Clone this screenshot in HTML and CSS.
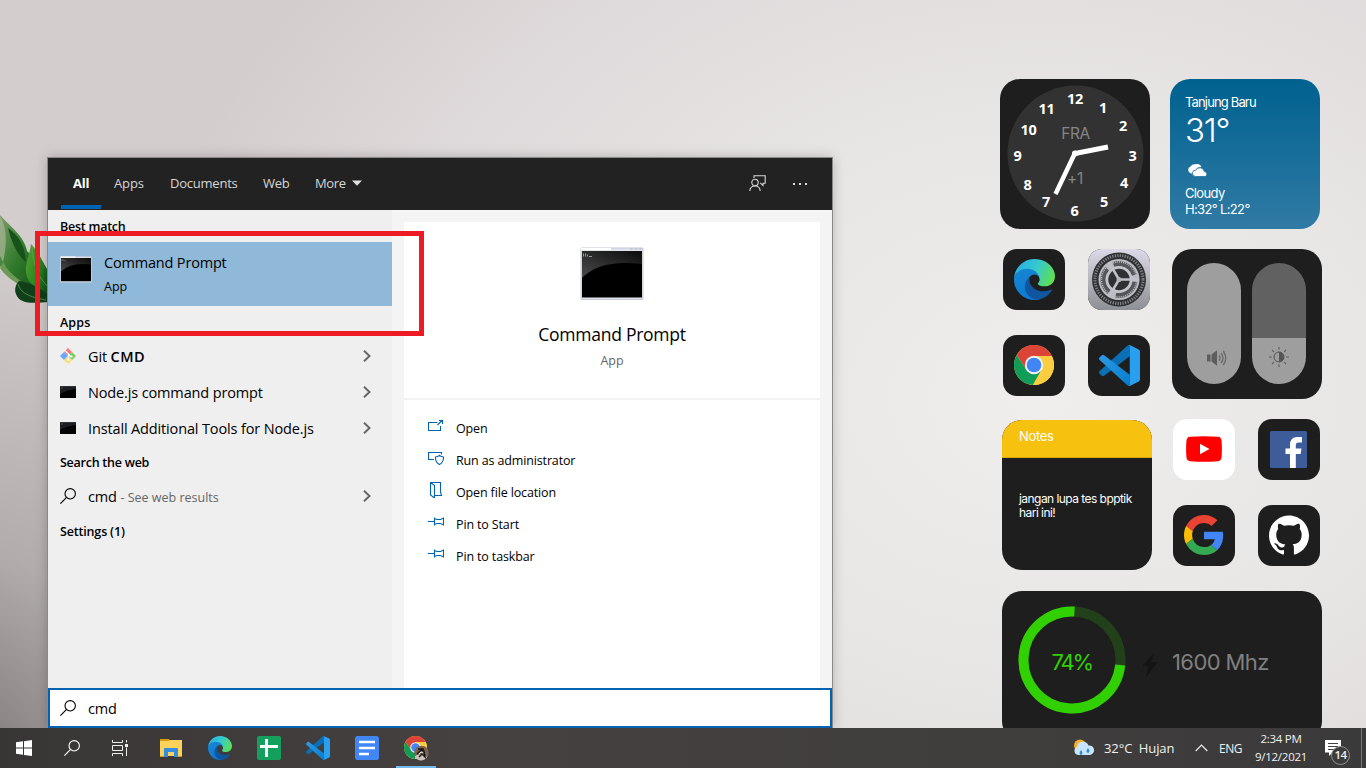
FILE: index.html
```html
<!DOCTYPE html>
<html lang="en">
<head>
<meta charset="utf-8">
<title>Desktop</title>
<link rel="stylesheet" href="styles.css">
</head>
<body>
<svg class="defs" width="0" height="0" aria-hidden="true">
  <defs>
    <linearGradient id="edgeTop" x1="0" y1="0.3" x2="1" y2="0.6"><stop offset="0" stop-color="#2ab0e4"/><stop offset=".5" stop-color="#35c8cf"/><stop offset="1" stop-color="#5fe04f"/></linearGradient>
    <linearGradient id="edgeLeft" x1="0" y1="0" x2=".4" y2="1"><stop offset="0" stop-color="#1887d0"/><stop offset="1" stop-color="#0b7bd6"/></linearGradient>
    <linearGradient id="silver" x1="0" y1="0" x2="0" y2="1"><stop offset="0" stop-color="#dcd9e8"/><stop offset="1" stop-color="#8d9094"/></linearGradient>
    <linearGradient id="leafA" x1="0" y1="0" x2="1" y2="1"><stop offset="0" stop-color="#7d9b68"/><stop offset=".45" stop-color="#2f7a2b"/><stop offset="1" stop-color="#123f17"/></linearGradient>
    <linearGradient id="leafB" x1="0" y1="0" x2="1" y2=".6"><stop offset="0" stop-color="#57a135"/><stop offset=".6" stop-color="#298a20"/><stop offset="1" stop-color="#14571a"/></linearGradient>
    <linearGradient id="sheen" x1="0" y1="1" x2="1" y2="0"><stop offset="0" stop-color="#4a4a4a"/><stop offset="1" stop-color="#0c0c0c"/></linearGradient>
    <linearGradient id="codeFront" x1="0" y1="0" x2="1" y2="1"><stop offset="0" stop-color="#2c9be6"/><stop offset="1" stop-color="#087dcc"/></linearGradient>
  </defs>
  <symbol id="edge" viewBox="0 0 256 256">
    <path fill="#0f55a0" d="M231.1 190.5c-3.4 1.8-6.9 3.4-10.5 4.7-11.5 4.3-23.6 6.5-35.9 6.5-47.3 0-88.5-32.5-88.5-74.3 0-11.4 6.4-21.9 16.4-27.3-42.8 1.8-53.8 46.4-53.8 72.5 0 74 68.1 81.4 82.8 81.4 7.9 0 19.8-2.3 27-4.6l1.3-.4c27.6-9.5 51-28.1 66.6-52.8 1.2-1.9.6-4.3-1.2-5.5-1.3-.8-2.9-.9-4.2-.2z"/>
    <path fill="url(#edgeLeft)" d="M105.7 241.4c-8.9-5.5-16.6-12.8-22.7-21.3-26.3-36-18.4-86.5 17.6-112.8 3.8-2.7 7.7-5.2 11.9-7.2 3.1-1.5 8.4-4.1 15.5-4 10.1.1 19.6 4.9 25.7 13 4 5.4 6.3 11.9 6.4 18.7 0-.2 24.5-79.6-80-79.6-43.9 0-80 41.7-80 78.2-.2 19.3 4 38.5 12.1 56 27.6 58.8 94.8 87.6 156.4 67.1-21.1 6.6-44.1 3.7-62.9-8.1z"/>
    <path fill="url(#edgeTop)" d="M152.3 148.9c-.8 1-3.3 2.5-3.3 5.7 0 2.6 1.7 5.1 4.7 7.2 14.4 10 41.5 8.7 41.6 8.7 10.7 0 21.1-2.9 30.3-8.3 18.8-11 30.4-31.1 30.4-52.9.3-22.4-8-37.3-11.3-43.9C223.5 23.9 177.7 0 128 0 58 0 1 56.2 0 126.2c.5-36.5 36.8-66 80-66 3.5 0 23.5.3 42 10.1 16.3 8.6 24.9 18.9 30.8 29.2 6.2 10.7 7.3 24.1 7.3 29.5s-2.7 13.3-7.8 19.9z"/>
  </symbol>
  <symbol id="chrome" viewBox="0 0 40 40">
    <circle cx="20" cy="20" r="20" fill="#fdcd40"/>
    <path fill="#db4437" d="M20 11H37.9A20 20 0 0 0 2.7 10L12.2 24.5Z"/>
    <path fill="#109d58" d="M2.7 10A20 20 0 0 0 19 40L27.8 24.5 12.2 24.5Z"/>
    <path fill="#fdcd40" d="M20 11H37.9A20 20 0 0 1 19 40L27.8 24.5Z"/>
    <circle cx="20" cy="20" r="9.2" fill="#f3f3f3"/>
    <circle cx="20" cy="20" r="7.3" fill="#4285f4"/>
  </symbol>
  <symbol id="code" viewBox="0 0 24 24">
    <path fill="#0a6fb4" d="M16.6.4 18 1v5.6L3 18q-.7.5-1.3 0L.4 16.8q-.8-.8 0-1.6Z"/>
    <path fill="url(#codeFront)" d="M.4 8.8q-.8-.8 0-1.6L1.7 6q.6-.5 1.3 0L18 17.4V23l-1.4.6Z"/>
    <path fill="#29a0ef" d="M16.5.5q.8-.8 1.8-.3l4.9 2.4q.8.4.8 1.4v16q0 1-.8 1.4l-4.9 2.4q-1 .5-1.8-.3 1.5.6 1.5-1V1.5q0-1.6-1.5-1Z"/>
  </symbol>
  <symbol id="search" viewBox="0 0 16 16">
    <circle cx="10.2" cy="5.8" r="5.2" fill="none" stroke="currentColor" stroke-width="1.1"/>
    <path d="M6.3 9.7.4 15.6" stroke="currentColor" stroke-width="1.2"/>
  </symbol>
  <symbol id="chev" viewBox="0 0 8 12"><path d="M1 .7 6.500 6 1 11.300" fill="none" stroke="#646464" stroke-width="1.900"/></symbol>
  <symbol id="pin" viewBox="0 0 16 16"><path d="M0 7.500h6M6.500 3.500v8M6.500 4.500l2.500 1h3.500l3-1.500v7l-3-1.500H9l-2.500 1" fill="none" stroke="#0063b1" stroke-width="1.1"/></symbol>
  <symbol id="miniterm" viewBox="0 0 16 12"><path d="M0 0h16v12H0z" fill="#030303"/><path d="M0 0h16v3Q6 4 0 8Z" fill="#1b1d20"/><path d="M1 2h2" stroke="#777" stroke-width=".6"/><path d="M0 .2h16" stroke="#6d7177" stroke-width=".4"/></symbol>
  <symbol id="term" viewBox="0 0 64 54">
    <path d="M1 1h62v51.500H1z" fill="#dfe3eb" stroke="#c5c9d3"/>
    <path d="M1 1h30v2H1z" fill="#fff"/><path d="M50 2h3m1.500 0h3m1.500 0h3" stroke="#b6bac4"/>
    <path d="M2 4h60v46.500H2z" fill="#000"/>
    <path d="M2 4h60v13Q20 12 2 31Z" fill="url(#sheen)"/>
    <path d="M3.500 6.500v3m2-3v3m2-2v2m1.500 0h3" stroke="#b0b0b0" stroke-width=".8"/>
  </symbol>
</svg>

<main class="desktop">
  <svg class="plant" width="60" height="110" viewBox="0 0 60 110">
    <path fill="url(#leafA)" d="M0 9C9 20 24 29 27 45c8 8 16 15 22 27v20C35 86 22 78 12 73 6 69 3 63 0 60Z"/>
    <path fill="#a9b596" d="M0 10c7 10 7 30 3 46L0 50Z" opacity=".7"/>
    <path fill="#17521b" d="M8 22c12 8 17 20 18 34-8-6-14-18-18-34Z"/>
    <path fill="#6c9955" d="M3 56C10 70 25 78 39 86 26 84 8 74 0 62Z"/>
    <path fill="url(#leafB)" d="M31 38c8 8 13 21 18 28v22C35 82 25 76 26 62c1-10 4-15 5-24Z"/>
    <path fill="#10401a" d="M19 75c10 1 21 7 30 14v7c-15 1-29 3-33-8-2-5 0-10 3-13Z"/>
    <path d="M18 78c2 8 10 13 28 16M32 40c1 18 5 30 17 42" fill="none" stroke="#6fa052" stroke-width=".7"/>
  </svg>

  <section class="widget clock">
    <svg width="150" height="150" viewBox="0 0 150 150">
      <circle cx="75.500" cy="74.500" r="68" fill="#323232"/>
      <g class="dim"><text x="75.500" y="60" text-anchor="middle">FRA</text><text x="75" y="105" text-anchor="middle">+1</text></g>
      <g class="hours" text-anchor="middle">
        <text x="75" y="24.500">12</text><text x="103" y="33.500">1</text><text x="123" y="52">2</text><text x="132.500" y="81.500">3</text><text x="124" y="108.500">4</text><text x="104" y="127.500">5</text><text x="74.500" y="136.500">6</text><text x="46" y="127.500">7</text><text x="27.500" y="111">8</text><text x="17.500" y="81.500">9</text><text x="28.500" y="55.500">10</text><text x="46.500" y="34.500">11</text>
      </g>
      <path d="M75 74.500 108 68" stroke="#fff" stroke-width="5"/><path d="M75 74 55.500 115" stroke="#fff" stroke-width="4.500"/><circle cx="75" cy="74.500" r="3" fill="#fff"/>
    </svg>
  </section>

  <section class="widget weather">
    <div class="place">Tanjung Baru</div><div class="temp">31°</div>
    <svg class="cloud" width="22" height="14" viewBox="0 0 22 14"><path fill="#fff" d="M4 10.500a3.700 3.700 0 0 1-.5-7A5 5 0 0 1 8 1.300 5 5 0 0 1 14.500 4Q10 4 8.500 7.300 6 8 5.500 10.500Z"/><path fill="#fff" stroke="#1b6f9f" stroke-width=".8" d="M8.500 13.500a3.200 3.200 0 0 1 .3-6.400 4.600 4.600 0 0 1 8.500 1.400 2.600 2.600 0 0 1 1 5Z"/></svg>
    <div>Cloudy</div><div>H:32° L:22°</div>
  </section>

  <div class="tile t-edge"><svg width="41" height="41"><use href="#edge"/></svg></div>
  <div class="tile t-settings">
    <svg width="62" height="61" viewBox="0 0 62 61">
      <rect width="62" height="61" fill="url(#silver)"/>
      <g fill="none" transform="translate(31 30.500)">
        <circle r="27" fill="#303134"/><circle r="24" stroke="#85868a" stroke-width="3" stroke-dasharray="1.200 1.314"/>
        <circle r="21.500" fill="#303134"/><circle r="20.500" fill="#bcbbc4"/>
        <circle r="16" stroke="#55565a" stroke-width="5" stroke-dasharray="26 7.510" transform="rotate(8)"/>
        <circle r="17.500" stroke="#bcbbc4" stroke-width="1.500" stroke-dasharray="1 1"/>
        <circle r="12" fill="#303134" stroke="#c4c3cb" stroke-width="2.500"/>
        <path d="M0 0h20M0 0l-10-17M0 0l-10 17" stroke="#c1c0c8" stroke-width="2.500"/>
        <circle r="2.500" fill="#b5b4bc"/>
      </g>
    </svg>
  </div>
  <div class="tile t-chrome"><svg width="40" height="40"><use href="#chrome"/></svg></div>
  <div class="tile t-code"><svg width="41" height="41"><use href="#code"/></svg></div>

  <section class="widget sliders">
    <div class="slider full"><svg width="20" height="16" viewBox="0 0 20 16"><path fill="#5d5d5d" d="M0 4.500h3.500v7H0zM4.500 4.500 10 .3v15.400l-5.500-4.200z"/><path d="M12 5.500q2 2.500 0 5M14 3q4 5 0 10M16.300 1q5 7 0 14" fill="none" stroke="#686868" stroke-width="1.300"/></svg></div>
    <div class="slider part"><svg width="22" height="22" viewBox="-11 -11 22 22"><circle r="5" fill="none" stroke="#555"/><path fill="#555" d="M0-5A5 5 0 0 1 0 5Z"/><path d="M0-10v2.500M0 10V7.500M-10 0h3M10 0H7M-7-7l1.800 1.800M7-7 5.200-5.200M-7 7l1.800-1.800M7 7 5.200 5.200" stroke="#606060" stroke-width="1.200"/></svg></div>
  </section>

  <section class="widget notes"><div class="notes-head">Notes</div><p>jangan lupa tes bpptik<br>hari ini!</p></section>

  <div class="tile t-youtube"><svg width="36" height="26" viewBox="0 0 36 26"><path fill="#f00" d="M4 .8Q18-.3 32 .8q3.300.2 3.600 4.200.6 8 0 16-.3 4-3.600 4.200-14 1.100-28 0Q.7 25 .4 21q-.6-8 0-16Q.7 1 4 .8Z"/><path fill="#fff" d="m14 7.800 9.500 5.200-9.500 5.200z"/></svg></div>
  <div class="tile t-facebook"><svg width="37" height="37" viewBox="0 0 37 37"><rect width="37" height="37" rx="1.500" fill="#3f5c9a"/><path fill="#fff" d="M20 37V23h-4.500v-5.500H20V14q0-8 7.500-8H32v5.500h-3.500q-2.700 0-2.700 2.700v3.300h5.700L30.700 23h-4.900v14Z"/></svg></div>
  <div class="tile t-google"><svg width="40" height="40" viewBox="0 0 48 48"><path fill="#ea4335" d="M24 9.500c3.540 0 6.710 1.220 9.210 3.600l6.850-6.850C35.900 2.380 30.470 0 24 0 14.620 0 6.510 5.380 2.560 13.220l7.980 6.190C12.430 13.720 17.740 9.500 24 9.500z"/><path fill="#4285f4" d="M46.980 24.550c0-1.570-.15-3.090-.38-4.550H24v9.020h12.940c-.58 2.960-2.260 5.480-4.780 7.180l7.730 6c4.510-4.180 7.090-10.360 7.090-17.650z"/><path fill="#fbbc05" d="M10.530 28.590c-.48-1.450-.76-2.990-.76-4.590s.27-3.140.76-4.590l-7.980-6.190C.92 16.460 0 20.120 0 24c0 3.880.92 7.540 2.560 10.780l7.970-6.190z"/><path fill="#34a853" d="M24 48c6.480 0 11.930-2.130 15.890-5.810l-7.730-6c-2.150 1.450-4.920 2.300-8.160 2.300-6.260 0-11.570-4.220-13.470-9.910l-7.980 6.190C6.510 42.620 14.620 48 24 48z"/></svg></div>
  <div class="tile t-github"><svg width="40" height="40" viewBox="0 0 24 24"><path fill="#fff" d="M12 .297c-6.630 0-12 5.373-12 12 0 5.303 3.438 9.800 8.205 11.385.6.113.82-.258.82-.577 0-.285-.01-1.040-.015-2.040-3.338.724-4.042-1.610-4.042-1.610C4.422 18.070 3.633 17.700 3.633 17.700c-1.087-.744.084-.729.084-.729 1.205.084 1.838 1.236 1.838 1.236 1.070 1.835 2.809 1.305 3.495.998.108-.776.417-1.305.76-1.605-2.665-.3-5.466-1.332-5.466-5.930 0-1.310.465-2.380 1.235-3.220-.135-.303-.54-1.523.105-3.176 0 0 1.005-.322 3.300 1.230.96-.267 1.980-.399 3-.405 1.020.006 2.040.138 3 .405 2.280-1.552 3.285-1.230 3.285-1.230.645 1.653.24 2.873.12 3.176.765.84 1.230 1.910 1.230 3.220 0 4.610-2.805 5.625-5.475 5.920.42.36.81 1.096.81 2.220 0 1.606-.015 2.896-.015 3.286 0 .315.21.69.825.57C20.565 22.092 24 17.592 24 12.297c0-6.627-5.373-12-12-12"/></svg></div>

  <section class="widget battery">
    <svg width="108" height="108" viewBox="0 0 108 108"><circle cx="54" cy="54" r="48.500" fill="none" stroke="#22401a" stroke-width="10"/><path d="M56.500 5.500A48.500 48.500 0 1 0 102.200 59" fill="none" stroke="#30d003" stroke-width="10"/><text x="54.500" y="64" text-anchor="middle" textLength="42">74%</text></svg>
    <svg class="bolt" width="16" height="24" viewBox="0 0 16 24"><path fill="#151515" d="M12 0 0 13h6L4 24 16 9H9z"/></svg>
    <span>1600 Mhz</span>
  </section>

  <section class="search-panel">
    <header class="tabs">
      <span class="tab active">All</span><span class="tab apps">Apps</span><span class="tab docs">Documents</span><span class="tab web">Web</span><span class="tab more">More <svg width="10" height="6"><path d="M0 .5h10L5 5.800z" fill="#e0e0e0"/></svg></span>
      <svg class="feedback" width="17" height="17" viewBox="0 0 17 17"><g fill="none" stroke="#d8d8d8" stroke-width="1.100"><path d="M5 3V.8h11.200v7.400H14v2.300L11.500 8.200H11"/><circle cx="6" cy="7.500" r="3.200"/><path d="M.8 16q.3-5 5.200-5t5.200 5"/></g></svg>
      <svg class="dots" width="16" height="4"><path d="M1 1h2v2H1zM7 1h2v2H7zM13 1h2v2h-2z" fill="#ddd"/></svg>
    </header>
    <div class="panel-body">
      <div class="results">
        <h2>Best match</h2>
        <div class="best"><svg width="32" height="27"><use href="#term"/></svg><div><div class="name">Command Prompt</div><div class="sub">App</div></div></div>
        <h2 class="h-apps">Apps</h2>
        <div class="row r-git"><svg class="ri" width="16" height="16" viewBox="0 0 16 16"><path d="m8 0 4 4-4 4-4-4z" fill="#f77b7b"/><path d="m12 4 4 4-4 4-4-4z" fill="#7bcc5d"/><path d="m4 4 4 4-4 4-4-4z" fill="#6ca6fb"/><path d="m8 8 4 4-4 4-4-4z" fill="#fbdc6e"/><path d="M5 2.500 8.500 6v6M8.500 6.500l3 2.500" stroke="#fff" stroke-width="1.200" fill="none"/><circle cx="8.500" cy="12" r="1.100" fill="#fff"/><circle cx="11.500" cy="8.500" r="1.100" fill="#fff"/></svg><span>Git <b>CMD</b></span><svg class="chev" width="8" height="12"><use href="#chev"/></svg></div>
        <div class="row r-node"><svg class="ri" width="16" height="12"><use href="#miniterm"/></svg><span>Node.js command prompt</span><svg class="chev" width="8" height="12"><use href="#chev"/></svg></div>
        <div class="row r-tools"><svg class="ri" width="16" height="12"><use href="#miniterm"/></svg><span>Install Additional Tools for Node.js</span><svg class="chev" width="8" height="12"><use href="#chev"/></svg></div>
        <h2>Search the web</h2>
        <div class="row r-web"><svg class="ri" width="16" height="16"><use href="#search"/></svg><span>cmd <small>- See web results</small></span><svg class="chev" width="8" height="12"><use href="#chev"/></svg></div>
        <h2 class="set">Settings (1)</h2>
      </div>
      <div class="detail">
        <div class="hero"><svg width="64" height="54"><use href="#term"/></svg><h1>Command Prompt</h1><div class="kind">App</div></div>
        <div class="actions">
          <div><svg width="16" height="16" viewBox="0 0 16 16"><path d="M9.500 4.500h-9v8h12V8M9.500 7l5-5M11 2.500h3.500V6" fill="none" stroke="#0063b1" stroke-width="1.100"/></svg><span>Open</span></div>
          <div><svg width="16" height="16" viewBox="0 0 16 16"><path d="M6 9.500H.5v-7h13v2M7.500 7q2.500 0 4-1.600Q13 7 15.500 7q.3 5-4 7.500-4.300-2.500-4-7.500Z" fill="none" stroke="#0063b1" stroke-width="1.100"/></svg><span>Run as administrator</span></div>
          <div><svg width="16" height="16" viewBox="0 0 16 16"><path d="M2.500 13V.5h10V10l1 3.500H6M2.500.5l4 3V16l-4-3Z" fill="none" stroke="#0063b1" stroke-width="1.100"/></svg><span>Open file location</span></div>
          <div><svg width="16" height="16"><use href="#pin"/></svg><span>Pin to Start</span></div>
          <div><svg width="16" height="16"><use href="#pin"/></svg><span>Pin to taskbar</span></div>
        </div>
      </div>
    </div>
    <div class="searchbox"><svg width="16" height="16"><use href="#search"/></svg><span>cmd</span></div>
  </section>
  <div class="marker"></div>
</main>

<footer class="taskbar">
  <div class="task"><svg width="16" height="16"><path fill="#fff" d="M0 2.300 7 1.300v6.200H0zM8 1.200 16 0v7.500H8zM0 8.500h7v6.300l-7-1zM8 8.500h8V16l-8-1.100z"/></svg></div>
  <div class="task"><svg class="white" width="16" height="16"><use href="#search"/></svg></div>
  <div class="task"><svg width="17" height="16"><path d="M.5 0v2.500h10V0M.5 16v-2.500h10V16M.5 5.500h10v5H.5zM14.500 0v2.500M14.500 7.500V16" fill="none" stroke="#eee"/><path d="M13 4h3v3h-3z" fill="#eee"/></svg></div>
  <div class="task app first"><svg width="22" height="20" viewBox="0 0 22 20"><path fill="#d99a0b" d="M0 1h9l1 2h-10z"/><path fill="#ffd25c" d="M0 3h8l2-1h12v16H0z"/><path fill="#348de0" d="M4 19v-8q0-1 1-1h12q1 0 1 1v8h-4v-5H8v5z"/><path d="M0 18.500h4M18 18.500h4" stroke="#d99a0b"/></svg></div>
  <div class="task app"><svg width="24" height="24"><use href="#edge"/></svg></div>
  <div class="task app"><svg width="24" height="24"><rect width="24" height="24" rx="2" fill="#12a05c"/><path d="M9.500 3v18M3 10.500h18" stroke="#fff" stroke-width="3"/></svg></div>
  <div class="task app"><svg width="24" height="24"><use href="#code"/></svg></div>
  <div class="task app"><svg width="24" height="24"><rect width="24" height="24" rx="2.500" fill="#4285f4"/><path d="M4 6h16M4 12h16M4 18h10" stroke="#fff" stroke-width="2.500"/></svg></div>
  <div class="task app running"><svg width="25" height="26" viewBox="0 0 25 26"><svg width="23" height="23" y="1"><use href="#chrome"/></svg><circle cx="17.500" cy="18" r="7.300" fill="#7d6250"/><path d="M11 21q6-4 12 1a7 7 0 0 1-12 0Z" fill="#c9c1bb"/><path d="m13 19 4-4 3 1 1 6-3-3-3 3M14 14h6" fill="none" stroke="#151515" stroke-width="1.400"/><path d="m15 19 2-2 2 1" stroke="#eee" fill="none"/></svg></div>
  <div class="tray">
    <svg class="tw" width="22" height="18" viewBox="0 0 22 18"><circle cx="7" cy="6.500" r="6" fill="#f9ad2a"/><path fill="#c9e5fb" d="M5 16A4.200 4.200 0 0 1 4 8a6 6 0 0 1 11.500-1.500A4.700 4.700 0 0 1 17 16Z"/><path d="M8 11q-3 4 0 5 3-1 0-5M15 9q-3 4 0 5 3-1 0-5" fill="#318bd8"/></svg>
    <span class="forecast">32°C&nbsp; Hujan</span>
    <svg class="up" width="13" height="8"><path d="m.7 7 5.800-5.800L12.300 7" fill="none" stroke="#eee" stroke-width="1.200"/></svg>
    <span class="lang">ENG</span>
    <div class="time"><span>2:34 PM</span><span>9/12/2021</span></div>
    <div class="note"><svg width="17" height="16"><path fill="#fff" d="M0 0h16v12.500H7.500L4 16v-3.500H0z"/><path d="M3 3.500h10M3 6.500h10M3 9.500h7" stroke="#444"/></svg><span class="count">14</span></div>
    <i class="peek"></i>
  </div>
</footer>
</body>
</html>
```
FILE: styles.css
```css
* { box-sizing: border-box; }
body { margin: 0; width: 1366px; height: 768px; overflow: hidden; font-family: "Open Sans", "Noto Sans", sans-serif; display: flex; flex-direction: column; }
svg { display: block; flex: none; }
.defs { position: absolute; }
h1, h2, p { margin: 0; }
.desktop { position: relative; height: 728px; overflow: hidden;
  background: radial-gradient(ellipse 420px 560px at -40px 800px, rgba(80,75,75,.72), rgba(100,95,95,.3) 45%, transparent 100%),
    radial-gradient(ellipse 900px 700px at 1040px 400px, #efeeec 0, #e8e5e5 40%, #ded9da 75%, #d4cdce 100%); }
.plant { position: absolute; left: 0; top: 206px; }

.widget { position: absolute; background: #1e1e1e; border-radius: 20px; overflow: hidden; font-family: Inter, sans-serif; color: #fff; }
.clock { left: 1000px; top: 79px; width: 150px; height: 150px; }
.dim { font-size: 15.500px; fill: #858585; letter-spacing: -.4px; }
.hours { font: bold 14.500px "Noto Sans", sans-serif; fill: #fff; letter-spacing: -.3px; }
.weather { left: 1170px; top: 79px; width: 150px; height: 150px; padding: 15px; background: linear-gradient(#00618f, #307ba5); font-size: 13px; line-height: 16px; letter-spacing: -.65px; }
.weather .place { letter-spacing: -.85px; }
.weather .temp { font-size: 33px; font-weight: 300; line-height: 40px; letter-spacing: -1.300px; }
.cloud { margin: 13px 0 8px 2px; }

.tile { position: absolute; width: 62px; height: 61px; border-radius: 14px; background: #1e1e1e; overflow: hidden; display: flex; align-items: center; justify-content: center; }
.t-edge { left: 1003px; top: 249px; }
.t-settings { left: 1088px; top: 249px; }
.t-chrome, .t-code, .t-google, .t-github, .t-youtube { padding-bottom: 1px; }
.t-facebook { padding: 0 1px 1px 0; }
.t-chrome { left: 1003px; top: 335px; }
.t-code { left: 1088px; top: 335px; }
.t-youtube { left: 1173px; top: 419px; background: #fff; }
.t-facebook { left: 1258px; top: 419px; }
.t-google { left: 1173px; top: 505px; }
.t-github { left: 1258px; top: 505px; }

.sliders { left: 1172px; top: 249px; width: 150px; height: 150px; padding: 14px 15px; display: flex; gap: 11px; }
.slider { width: 54px; height: 121px; border-radius: 27px; display: flex; align-items: flex-end; justify-content: center; }
.full { background: #9e9e9e; padding: 0 0 18px 5px; }
.part { background: linear-gradient(#616161 75px, #9e9e9e 75px); padding-bottom: 16px; }

.notes { left: 1002px; top: 420px; width: 150px; height: 150px; }
.notes-head { height: 38px; padding: 8px 17px; background: #f7c20f; border-bottom: 1px solid #d9a90a; font-size: 13px; line-height: 17px; letter-spacing: -.35px; }
.notes p { padding: 34px 17px; font-size: 12px; line-height: 14px; letter-spacing: -.55px; white-space: nowrap; }

.battery { left: 1002px; top: 591px; width: 320px; height: 150px; padding: 15px 16px; display: flex; align-items: flex-start; font-size: 22px; color: #808080; letter-spacing: -.6px; }
.battery text { font-size: 22px; fill: #30d003; }
.bolt { margin: 47px 14px 0 16px; }
.battery span { margin-top: 43px; line-height: 27px; }

.search-panel { position: absolute; left: 48px; top: 158px; width: 784px; height: 570px; display: flex; flex-direction: column; background: #f4f4f4; box-shadow: 0 0 0 1px #8b8888, 0 0 12px rgba(0,0,0,.25); color: #000; }
.tabs { height: 52px; background: #222; display: flex; align-items: center; padding-left: 13px; color: #d6d6d6; font-size: 13px; }
.tab { height: 52px; line-height: 51px; margin-right: 26px; letter-spacing: -.23px; white-space: nowrap; }
.tab.active { width: 40px; margin-right: 13px; padding-left: 12px; color: #fff; font-weight: 700; background: linear-gradient(#0063b1, #0063b1) 0 47px / 40px 4px no-repeat; }
.tab.apps { width: 30px; letter-spacing: -.1px; }
.tab.docs { width: 67px; }
.tab.web { width: 27px; margin-right: 25px; }
.tab.more { display: flex; align-items: center; gap: 6px; width: 48px; height: 50px; margin: 0 386px 2px 0; letter-spacing: -.35px; }
.feedback { margin-right: 26px; margin-bottom: 2px; }
.dots { margin-bottom: 1px; }
.panel-body { height: 478px; display: flex; }
.results { width: 344px; background: #efefef; }
.results h2 { height: 32px; line-height: 33px; padding-left: 12px; font-size: 12.500px; font-weight: 600; letter-spacing: -.25px; }
.results h2.h-apps { letter-spacing: .1px; }
.results h2.set { line-height: 35px; letter-spacing: -.17px; }
.best { height: 64px; background: #90b8d8; display: flex; padding: 8px 12px; gap: 12px; }
.best svg { margin-top: 6px; }
.name { font-size: 14.500px; line-height: 25px; letter-spacing: -.18px; }
.sub { font-size: 12.500px; line-height: 23px; }
.row { height: 36px; display: flex; align-items: center; padding: 0 21px 0 12px; gap: 12px; font-size: 14.500px; letter-spacing: -.14px; white-space: nowrap; }
.row b { font-weight: 600; letter-spacing: .4px; }
.row small { font-size: 12.500px; color: #666; letter-spacing: 0; }
.row .chev { margin-left: auto; }
.detail { width: 416px; margin: 12px 0 0 12px; background: #fff; }
.hero { height: 178px; border-bottom: 2px solid #f2f2f2; display: flex; flex-direction: column; align-items: center; padding-top: 25px; }
.hero h1 { font-size: 17.500px; font-weight: 400; line-height: 24px; margin-top: 21px; letter-spacing: -.25px; }
.kind { color: #666; font-size: 12.500px; line-height: 17px; margin-top: 6px; }
.actions { padding: 12px 24px; }
.actions div { height: 32px; display: flex; align-items: center; gap: 12px; font-size: 12.500px; letter-spacing: -.14px; }
.actions svg { margin-top: -5px; }
.searchbox { height: 40px; border: 2px solid #0063b1; background: #fff; display: flex; align-items: center; gap: 12px; padding-left: 10px; font-size: 14.500px; letter-spacing: -.14px; }
.marker { position: absolute; left: 35px; top: 231px; width: 389px; height: 105px; border: 5px solid #ed1c24; }

.taskbar { height: 40px; display: flex; background: linear-gradient(90deg, #383635, #454140 35%, #403d3d 70%, #3b3a3a); color: #f0f0f0; }
.task { width: 48px; height: 40px; display: flex; align-items: center; justify-content: center; }
.white { color: #fff; }
.task.app { width: 49.100px; }
.task.first { margin-left: 2px; }
.running { background: linear-gradient(#76b9ed, #76b9ed) 50% 38px / 40px 2px no-repeat; }
.tray { margin-left: auto; display: flex; align-items: center; font-size: 13px; }
.tw { margin-right: 9px; }
.forecast { width: 76px; white-space: nowrap; letter-spacing: -.1px; }
.up { margin: 0 11px 0 15px; }
.lang { width: 24px; font-size: 12px; letter-spacing: -.5px; }
.time { width: 54px; margin-left: 11px; display: flex; flex-direction: column; align-items: center; font-size: 11.500px; line-height: 18px; letter-spacing: -.25px; white-space: nowrap; }
.note { position: relative; margin: 0 19px 0 17px; }
.count { position: absolute; left: 6px; top: 6px; width: 19px; height: 19px; border-radius: 50%; background: #3d3c3c; border: 1px solid #909090; font-size: 11.500px; font-weight: 600; line-height: 16px; text-align: center; letter-spacing: -.5px; }
.peek { width: 5px; height: 40px; border-left: 1px solid #777; }
```
